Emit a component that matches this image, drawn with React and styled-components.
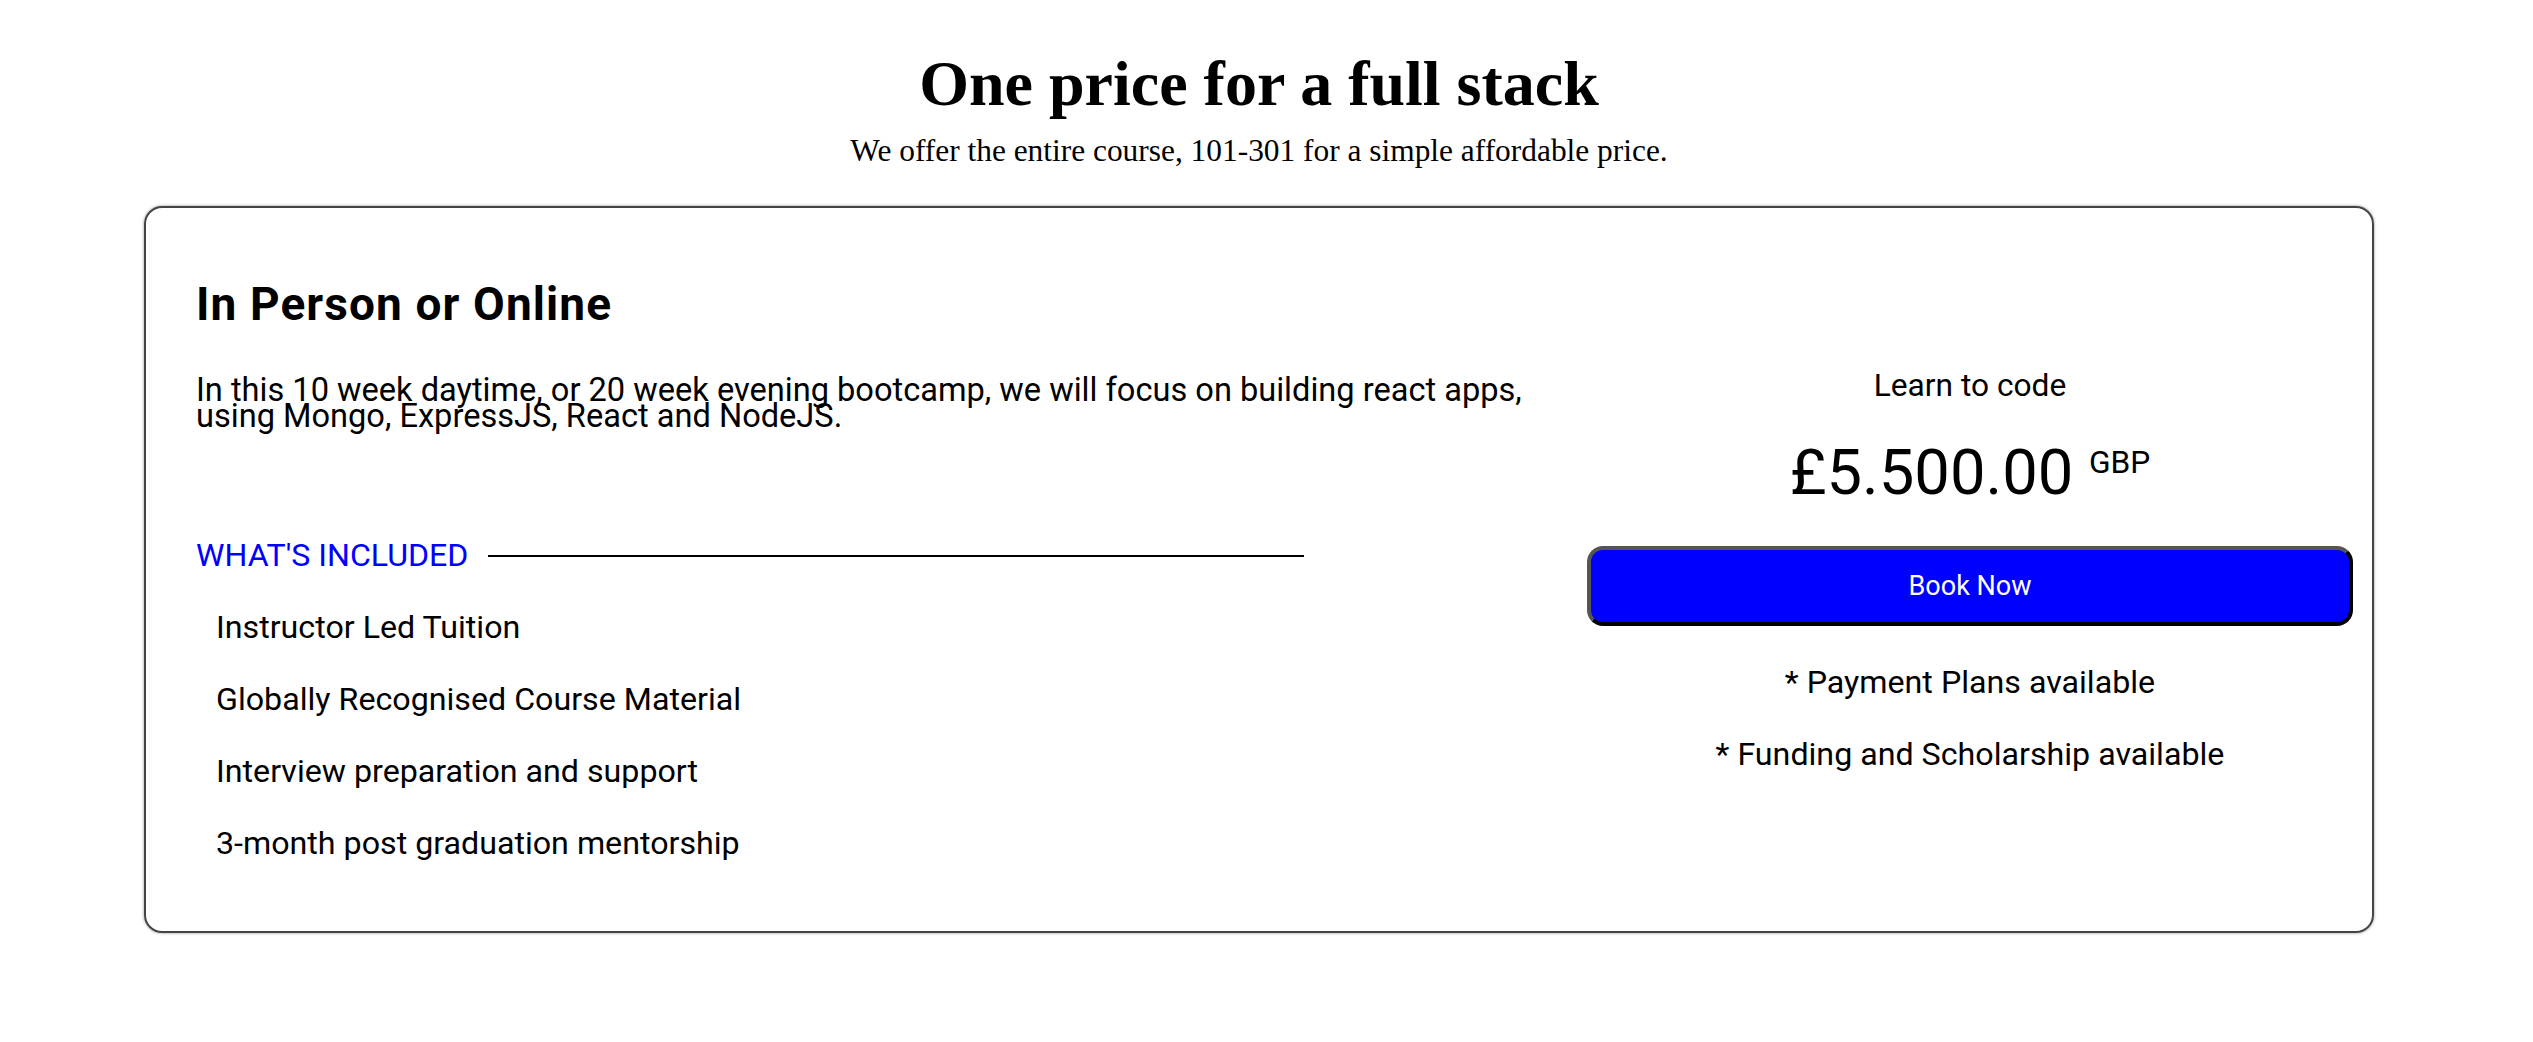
import React from "react";
import styled, { createGlobalStyle } from "styled-components";

const GlobalStyle = createGlobalStyle`
  * {
    box-sizing: border-box;
  }
  body {
    margin: 0;
    background: #ffffff;
    color: #000000;
    font-family: Roboto, "Liberation Sans", Arial, sans-serif;
  }
`;

const Page = styled.main`
  width: 2518px;
  padding: 48px 0 100px;
`;

const Intro = styled.header`
  text-align: center;
  font-family: "Liberation Serif", "Times New Roman", serif;
`;

const Title = styled.h1`
  margin: 0;
  font-size: 64px;
  line-height: 72px;
  font-weight: 700;
`;

const Lead = styled.p`
  margin: 13px 0 0;
  font-size: 31.4px;
  line-height: 36px;
`;

const Card = styled.section`
  margin: 37px 144px 0;
  display: flex;
  align-items: center;
  gap: 27px;
  padding: 70px 19px 69px 50px;
  border: 2px solid #444444;
  border-radius: 18px;
  box-shadow: 0 0 3px rgba(0, 0, 0, 0.45);
`;

const Details = styled.div`
  flex: 1;
  min-width: 0;
`;

const CardHeading = styled.h2`
  margin: 0;
  font-size: 46px;
  letter-spacing: 1.1px;
  line-height: 52px;
  font-weight: 700;
`;

const Blurb = styled.p`
  margin: 46.5px 0 0;
  font-size: 32.6px;
  line-height: 26px;
`;

const IncludedRow = styled.div`
  display: flex;
  align-items: center;
  max-width: 1108px;
  margin-top: 108.5px;
`;

const IncludedLabel = styled.span`
  color: #0000ff;
  font-size: 32.1px;
  line-height: 37px;
  text-transform: uppercase;
`;

const Rule = styled.span`
  flex: 1;
  height: 2px;
  margin-left: 20px;
  background: #000000;
`;

const Features = styled.ul`
  list-style: none;
  margin: 34.5px 0 0;
  padding: 0 0 0 20px;
  display: flex;
  flex-direction: column;
  gap: 35px;
  li {
    font-size: 32.2px;
    line-height: 37px;
  }
`;

const Pricing = styled.aside`
  width: 766px;
  display: flex;
  flex-direction: column;
  align-items: center;
  text-align: center;
`;

const Tagline = styled.p`
  margin: 0;
  font-size: 31.7px;
  line-height: 37px;
`;

const Price = styled.p`
  margin: 22px 0 0;
  font-size: 63.3px;
  line-height: 74px;
`;

const Currency = styled.span`
  font-size: 31.7px;
  vertical-align: 21px;
`;

const BookButton = styled.button`
  margin-top: 37px;
  width: 100%;
  height: 80px;
  background: #0000ff;
  color: #ffffff;
  font-family: Roboto, "Liberation Sans", Arial, sans-serif;
  font-size: 27px;
  border: 4px solid;
  border-color: #555555 #000000 #000000 #555555;
  border-radius: 16px;
  cursor: pointer;
`;

const Notes = styled.ul`
  list-style: none;
  margin: 37.5px 0 0;
  padding: 0;
  display: flex;
  flex-direction: column;
  gap: 35px;
  li {
    font-size: 32.2px;
    line-height: 37px;
  }
`;

const features = [
  "Instructor Led Tuition",
  "Globally Recognised Course Material",
  "Interview preparation and support",
  "3-month post graduation mentorship",
];

const notes = ["* Payment Plans available", "* Funding and Scholarship available"];

const App = () => {
  return (
    <Page>
      <GlobalStyle />
      <Intro>
        <Title>One price for a full stack</Title>
        <Lead>We offer the entire course, 101-301 for a simple affordable price.</Lead>
      </Intro>
      <Card>
        <Details>
          <CardHeading>In Person or Online</CardHeading>
          <Blurb>
            In this 10 week daytime, or 20 week evening bootcamp, we will focus on building react apps,
            using Mongo, ExpressJS, React and NodeJS.
          </Blurb>
          <IncludedRow>
            <IncludedLabel>What's included</IncludedLabel>
            <Rule />
          </IncludedRow>
          <Features>
            {features.map(item => (
              <li key={item}>{item}</li>
            ))}
          </Features>
        </Details>
        <Pricing>
          <Tagline>Learn to code</Tagline>
          <Price>
            £5.500.00 <Currency>GBP</Currency>
          </Price>
          <BookButton>Book Now</BookButton>
          <Notes>
            {notes.map(note => (
              <li key={note}>{note}</li>
            ))}
          </Notes>
        </Pricing>
      </Card>
    </Page>
  );
};

export default App;
